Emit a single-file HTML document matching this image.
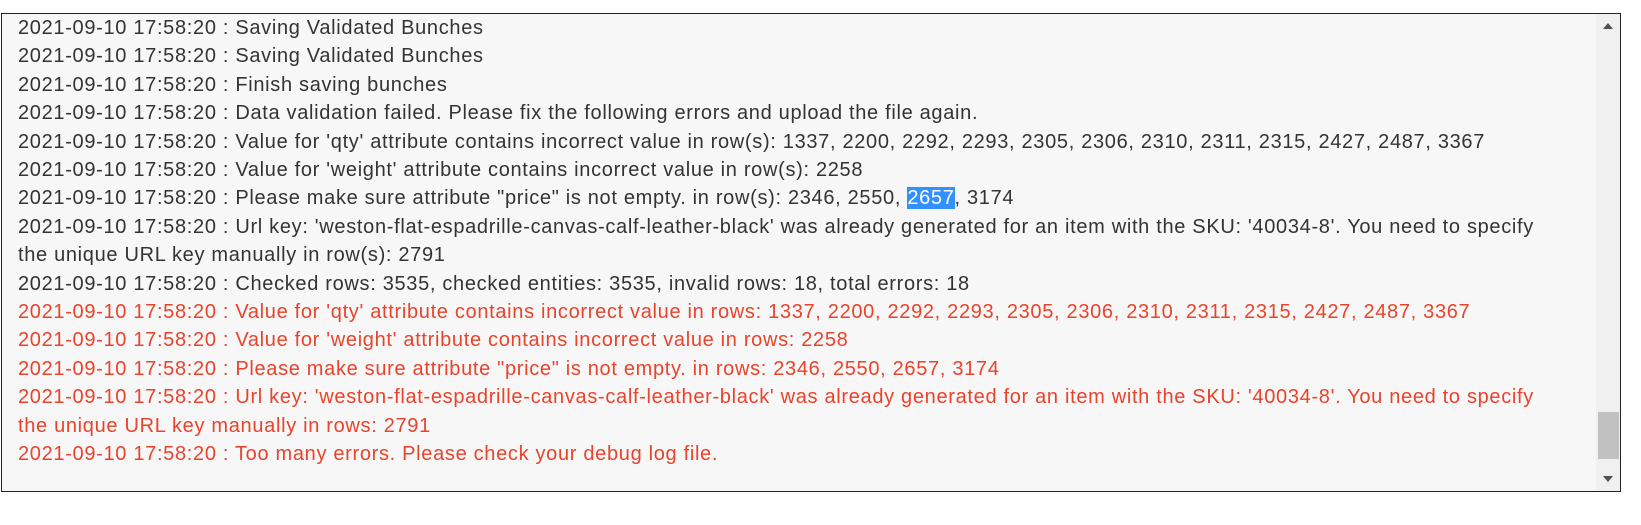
<!DOCTYPE html>
<html><head><meta charset="utf-8"><style>
html,body{margin:0;padding:0;background:#fff;width:1641px;height:525px;overflow:hidden}
.box{position:absolute;left:1px;top:13px;width:1618px;height:477px;border:1px solid #222;background:#f7f7f7}
.log{position:absolute;left:16px;top:0;width:1570px;font-family:"Liberation Sans",sans-serif;font-size:20px;letter-spacing:0.68px;line-height:28.4px;color:#333;white-space:nowrap}
.e{color:#e9432b}
.sel{background:#3390ff;color:#fff}
.sb{position:absolute;left:1594px;top:0;width:24px;height:477px;background:#f0f0f0}
.th{position:absolute;left:2px;top:398px;width:21px;height:47px;background:#c1c1c1}
.up{position:absolute;left:7px;top:9px;width:0;height:0;border-left:5px solid transparent;border-right:5px solid transparent;border-bottom:6px solid #505050}
.dn{position:absolute;left:7px;top:462px;width:0;height:0;border-left:5px solid transparent;border-right:5px solid transparent;border-top:6px solid #505050}
</style></head><body>
<div class="box">
<div class="log">
<div>2021-09-10 17:58:20 : Saving Validated Bunches</div>
<div>2021-09-10 17:58:20 : Saving Validated Bunches</div>
<div>2021-09-10 17:58:20 : Finish saving bunches</div>
<div>2021-09-10 17:58:20 : Data validation failed. Please fix the following errors and upload the file again.</div>
<div>2021-09-10 17:58:20 : Value for 'qty' attribute contains incorrect value in row(s): 1337, 2200, 2292, 2293, 2305, 2306, 2310, 2311, 2315, 2427, 2487, 3367</div>
<div>2021-09-10 17:58:20 : Value for 'weight' attribute contains incorrect value in row(s): 2258</div>
<div>2021-09-10 17:58:20 : Please make sure attribute "price" is not empty. in row(s): 2346, 2550, <span class="sel">2657</span>, 3174</div>
<div>2021-09-10 17:58:20 : Url key: 'weston-flat-espadrille-canvas-calf-leather-black' was already generated for an item with the SKU: '40034-8'. You need to specify<br>the unique URL key manually in row(s): 2791</div>
<div>2021-09-10 17:58:20 : Checked rows: 3535, checked entities: 3535, invalid rows: 18, total errors: 18</div>
<div class="e">2021-09-10 17:58:20 : Value for 'qty' attribute contains incorrect value in rows: 1337, 2200, 2292, 2293, 2305, 2306, 2310, 2311, 2315, 2427, 2487, 3367</div>
<div class="e">2021-09-10 17:58:20 : Value for 'weight' attribute contains incorrect value in rows: 2258</div>
<div class="e">2021-09-10 17:58:20 : Please make sure attribute "price" is not empty. in rows: 2346, 2550, 2657, 3174</div>
<div class="e">2021-09-10 17:58:20 : Url key: 'weston-flat-espadrille-canvas-calf-leather-black' was already generated for an item with the SKU: '40034-8'. You need to specify<br>the unique URL key manually in rows: 2791</div>
<div class="e">2021-09-10 17:58:20 : Too many errors. Please check your debug log file.</div>
</div>
<div class="sb"><div class="up"></div><div class="th"></div><div class="dn"></div></div>
</div>
</body></html>
